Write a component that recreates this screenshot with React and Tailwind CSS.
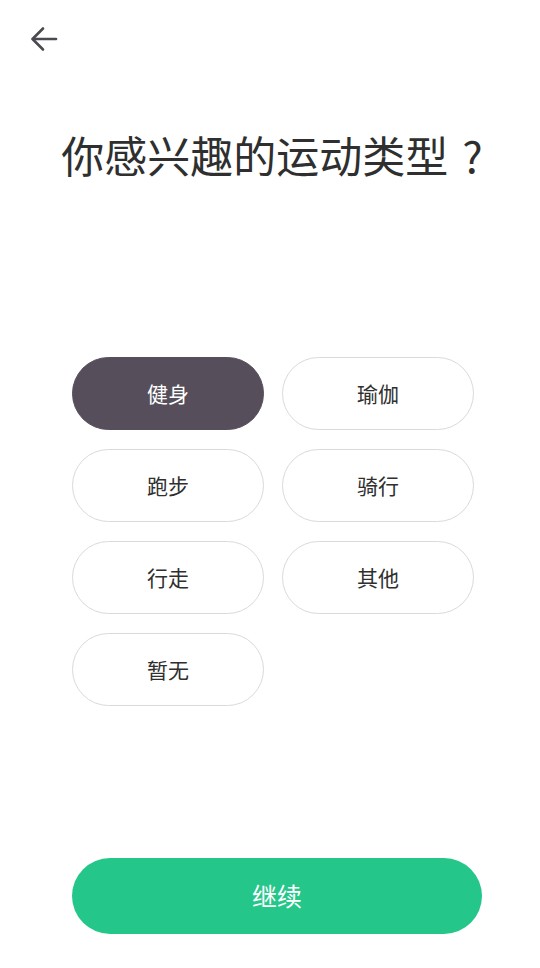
import React, { useState } from 'react';

const sports = ['健身', '瑜伽', '跑步', '骑行', '行走', '其他', '暂无'];

export default function App() {
  const [selected, setSelected] = useState('健身');

  return (
    <div
      className="w-[540px] h-[968px] bg-white flex flex-col overflow-hidden"
      style={{ fontFamily: '"Noto Sans CJK SC", "Noto Sans", sans-serif' }}
    >
      {/* Back */}
      <div className="pt-[26px] pl-[30px] h-[80px]">
        <svg width="28" height="26" viewBox="0 0 28 26" fill="none" stroke="#4a4a50" strokeWidth="2.6" strokeLinecap="round" strokeLinejoin="round">
          <path d="M26 13H3" />
          <path d="M13 2.5L2.5 13L13 23.5" />
        </svg>
      </div>

      {/* Title */}
      <h1 className="mt-[45px] text-center text-[43px] leading-[58px] text-[#2f2f2f] pl-[6px]">
        你感兴趣的运动类型<span className="ml-[14px] mr-[2px]">?</span>
      </h1>

      {/* Options */}
      <div className="mt-[174px] ml-[72px] w-[402px] grid grid-cols-2 gap-x-[18px] gap-y-[19px]">
        {sports.map(s => (
          <button
            key={s}
            onClick={() => setSelected(s)}
            className={`h-[73px] rounded-full text-[21px] ${selected === s ? 'bg-[#564f5b] text-white border border-[#564f5b]' : 'bg-white text-[#2f2f2f] border border-[#dadada]'}`}
          >
            {s}
          </button>
        ))}
      </div>

      <div className="flex-1" />

      {/* Continue */}
      <button className="ml-[72px] mb-[34px] w-[410px] h-[76px] rounded-full bg-[#25c68a] text-white text-[25px]">
        继续
      </button>
    </div>
  );
}
